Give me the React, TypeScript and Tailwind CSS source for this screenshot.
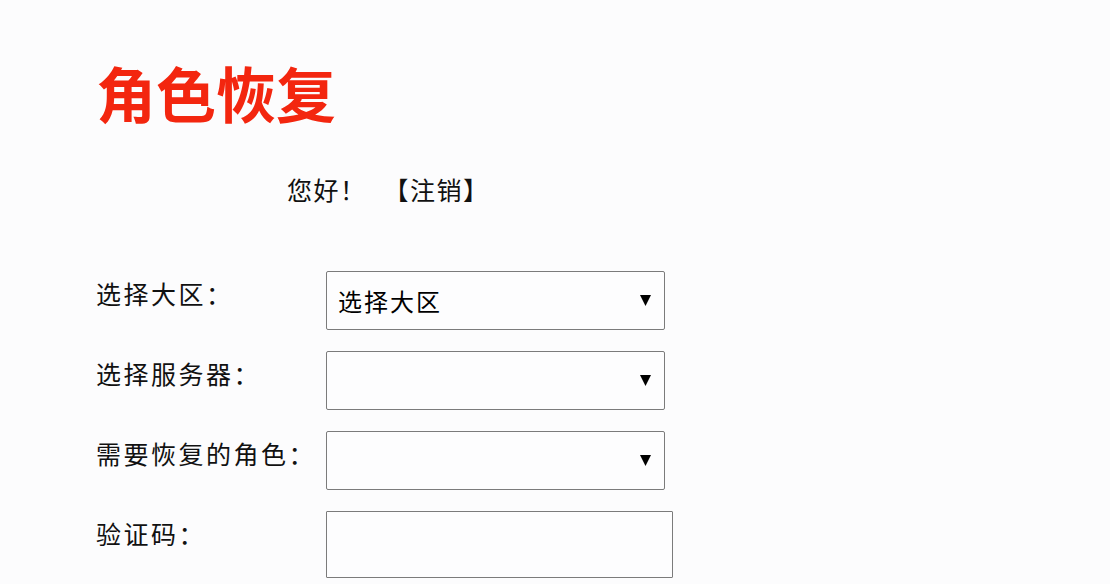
const font = { fontFamily: '"Noto Sans CJK SC", "Noto Sans", sans-serif' };

function Arrow() {
  return (
    <svg width="11" height="11" viewBox="0 0 11 11" className="shrink-0">
      <polygon points="0,0 11,0 5.5,11" fill="#000" />
    </svg>
  );
}

function FakeSelect({ value }: { value?: string }) {
  return (
    <div className="flex h-[59px] w-[339px] items-center justify-between rounded-[2px] border border-[#7b7b7b] bg-[#fdfdfe] pl-[11px] pr-[13px]">
      <span className="text-[24px] leading-none tracking-[2px] text-black">{value ?? ''}</span>
      <Arrow />
    </div>
  );
}

function Row({ label, children }: { label: string; children: React.ReactNode }) {
  return (
    <div className="flex items-start">
      <div className="w-[230px] pt-[10px] text-[25px] leading-none tracking-[2.5px] text-[#111]">{label}</div>
      {children}
    </div>
  );
}

export default function App() {
  return (
    <div className="h-[584px] w-[1110px] overflow-hidden bg-[#fcfcfd] pl-[96px]" style={font}>
      <h1 className="pt-[62px] text-[60px] font-bold leading-none text-[#f3260f]">角色恢复</h1>

      <div className="mt-[55px] pl-[191px] text-[25px] leading-none tracking-[1.5px] text-[#111]">
        <span>您好！</span>
        <span className="ml-[17px]">【注销】</span>
      </div>

      <div className="mt-[69px] flex flex-col gap-[21px]">
        <Row label="选择大区：">
          <FakeSelect value="选择大区" />
        </Row>
        <Row label="选择服务器：">
          <FakeSelect />
        </Row>
        <Row label="需要恢复的角色：">
          <FakeSelect />
        </Row>
        <Row label="验证码：">
          <input
            type="text"
            className="h-[67px] w-[347px] rounded-[1px] border border-[#7b7b7b] bg-[#fdfdfe] px-2 text-[24px] outline-none"
          />
        </Row>
      </div>
    </div>
  );
}
